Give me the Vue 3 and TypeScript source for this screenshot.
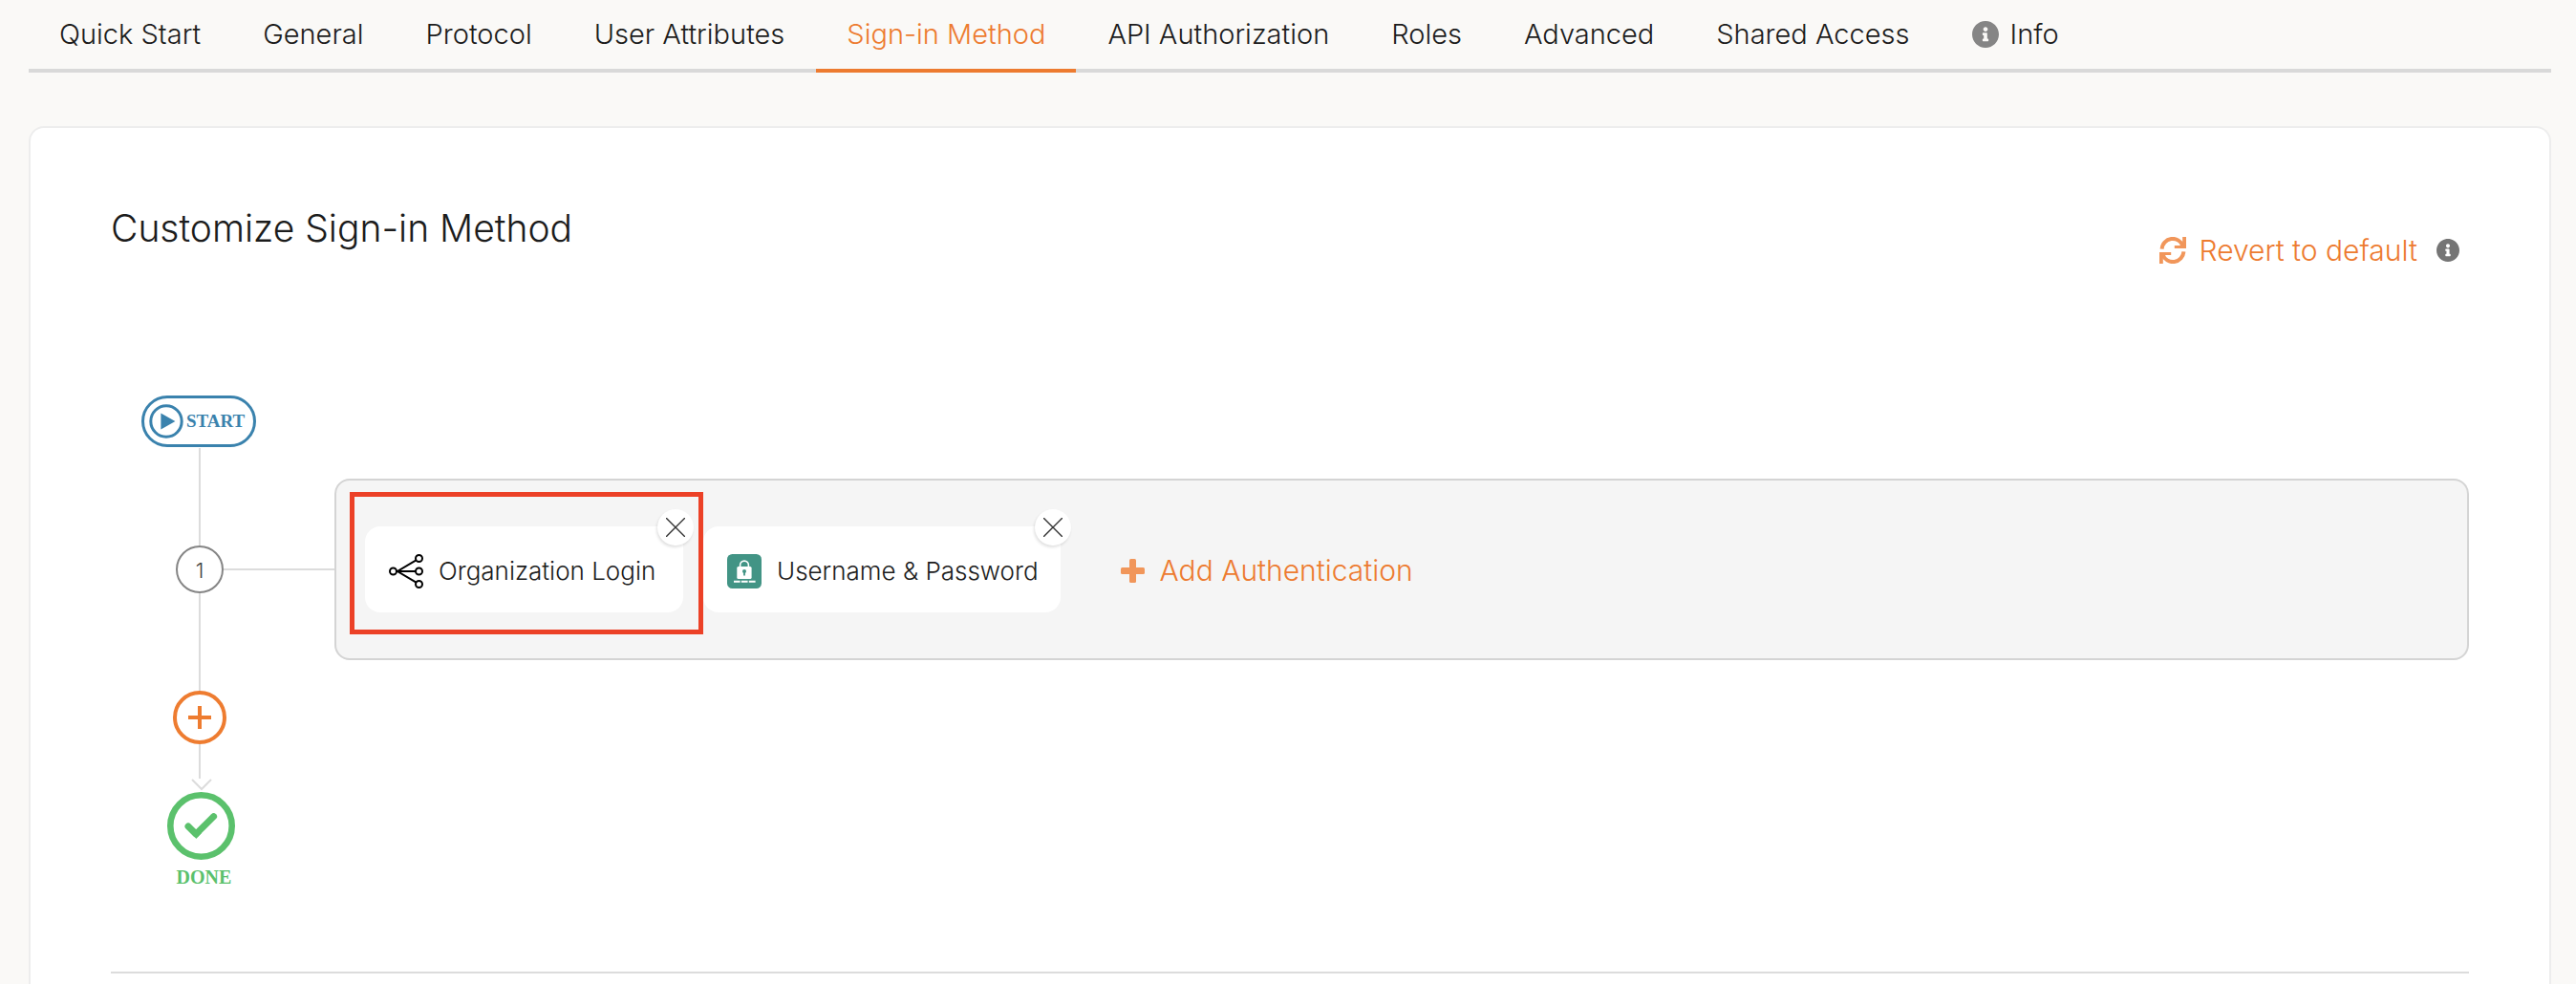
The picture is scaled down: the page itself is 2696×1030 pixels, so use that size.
<script setup lang="ts">
interface Tab {
  label: string
  active?: boolean
  info?: boolean
}

interface Authenticator {
  name: string
  icon: 'organization' | 'password'
  highlighted?: boolean
}

const tabs: Tab[] = [
  { label: 'Quick Start' },
  { label: 'General' },
  { label: 'Protocol' },
  { label: 'User Attributes' },
  { label: 'Sign-in Method', active: true },
  { label: 'API Authorization' },
  { label: 'Roles' },
  { label: 'Advanced' },
  { label: 'Shared Access' },
  { label: 'Info', info: true },
]

const authenticators: Authenticator[] = [
  { name: 'Organization Login', icon: 'organization', highlighted: true },
  { name: 'Username & Password', icon: 'password' },
]

const infoPath =
  'M256 8C119.043 8 8 119.083 8 256c0 136.997 111.043 248 248 248s248-111.003 248-248C504 119.083 392.957 8 256 8zm0 110c23.196 0 42 18.804 42 42s-18.804 42-42 42-42-18.804-42-42 18.804-42 42-42zm56 254c0 6.627-5.373 12-12 12h-88c-6.627 0-12-5.373-12-12v-24c0-6.627 5.373-12 12-12h12v-64h-12c-6.627 0-12-5.373-12-12v-24c0-6.627 5.373-12 12-12h64c6.627 0 12 5.373 12 12v100h12c6.627 0 12 5.373 12 12v24z'
</script>

<template>
  <div class="page">
    <nav class="tabs">
      <a
        v-for="tab in tabs"
        :key="tab.label"
        href="#"
        class="tab"
        :class="{ active: tab.active }"
        :aria-current="tab.active ? 'page' : undefined"
      >
        <svg v-if="tab.info" class="tab-icon" viewBox="8 8 496 496" aria-hidden="true">
          <path :d="infoPath" fill="currentColor" />
        </svg>
        <span>{{ tab.label }}</span>
      </a>
    </nav>

    <main class="panel">
      <header class="panel-header">
        <h1>Customize Sign-in Method</h1>
        <div class="revert">
          <button type="button" class="text-button">
            <svg class="sync-icon" viewBox="0 0 28 28" aria-hidden="true">
              <g fill="none" stroke="currentColor" stroke-width="4">
                <path d="M2.6 12.6A11.3 11.3 0 0 1 24.6 9.6" />
                <path d="M25.4 15.4A11.3 11.3 0 0 1 3.4 18.4" />
              </g>
              <path d="M24.2 0H28V12H15.8V9H21L24.2 8Z" fill="currentColor" />
              <path d="M3.8 28H0V16H12.2V19H7L3.8 20Z" fill="currentColor" />
            </svg>
            Revert to default
          </button>
          <svg class="hint-icon" viewBox="8 8 496 496" role="img" aria-label="Info">
            <path :d="infoPath" fill="currentColor" />
          </svg>
        </div>
      </header>

      <section class="flow">
        <div class="rail">
          <div class="start">
            <svg class="play-icon" viewBox="0 0 36 36" aria-hidden="true">
              <circle cx="18" cy="18" r="16.2" fill="none" stroke="currentColor" stroke-width="3" />
              <path d="M12.4 9.6 27.4 18 12.4 26.6Z" fill="currentColor" />
            </svg>
            <span>START</span>
          </div>
          <span class="line short"></span>
        </div>

        <div class="step">
          <div class="rail">
            <span class="line"></span>
            <span class="step-number">1</span>
            <span class="line"></span>
          </div>
          <span class="connector"></span>
          <div class="options">
            <div
              v-for="item in authenticators"
              :key="item.name"
              class="option"
              :class="{ highlighted: item.highlighted }"
            >
              <svg v-if="item.icon === 'organization'" class="option-icon" viewBox="0 0 36 36" aria-hidden="true">
                <g fill="none" stroke="#000" stroke-width="2">
                  <circle cx="4.5" cy="18" r="3.5" />
                  <circle cx="31.5" cy="4.5" r="3.5" />
                  <circle cx="31.5" cy="18" r="3.5" />
                  <circle cx="31.5" cy="31.5" r="3.5" />
                  <path d="M28.5 6.4 9 18 28.5 29.6M8 18H28" />
                </g>
              </svg>
              <svg v-else class="option-icon" viewBox="0 0 36 36" aria-hidden="true">
                <rect width="36" height="36" rx="5.5" fill="#429485" />
                <path d="M13.6 14V11.5A4.4 4.4 0 0 1 22.4 11.5V14" fill="none" stroke="#fff" stroke-width="1.6" />
                <rect x="10.3" y="13" width="15.3" height="13" rx="1.6" fill="#fff" />
                <circle cx="18" cy="18" r="2" fill="#429485" />
                <path d="M18 18V22.6" stroke="#429485" stroke-width="1.8" />
                <path d="M7 28.8H13.6M14.8 28.8H21.6M22.8 28.8H29.6" stroke="#fff" stroke-width="2" />
              </svg>
              <span>{{ item.name }}</span>
              <button type="button" class="remove" :aria-label="`Remove ${item.name}`">
                <svg viewBox="0 0 20 20" aria-hidden="true">
                  <path d="M0 0 20 20M20 0 0 20" fill="none" stroke="#333" stroke-width="1.4" />
                </svg>
              </button>
            </div>
            <button type="button" class="text-button add">
              <svg class="plus-icon" viewBox="0 0 25 25" aria-hidden="true">
                <rect x="9" width="7" height="25" rx="1.5" fill="currentColor" />
                <rect y="9" width="25" height="7" rx="1.5" fill="currentColor" />
              </svg>
              Add Authentication
            </button>
          </div>
        </div>

        <div class="rail">
          <span class="line short"></span>
          <button type="button" class="add-step" aria-label="Add step">
            <svg viewBox="0 0 24 24" aria-hidden="true">
              <path d="M12 0V24M0 12H24" stroke="currentColor" stroke-width="4" />
            </svg>
          </button>
          <span class="line tail"></span>
          <div class="done">
            <svg class="arrow-icon" viewBox="0 0 22 14" aria-hidden="true">
              <path d="M1 1 11 11 21 1" fill="none" stroke="currentColor" stroke-width="2" />
            </svg>
            <svg class="done-icon" viewBox="0 0 71 71" aria-hidden="true">
              <circle cx="35.5" cy="35.5" r="32.2" fill="none" stroke="currentColor" stroke-width="6.6" />
              <path d="M48.6 25.6 30.3 43.9" fill="none" stroke="currentColor" stroke-width="7" stroke-linecap="round" />
              <path d="M22 36 29.8 43.8" fill="none" stroke="currentColor" stroke-width="7" stroke-linecap="round" />
              <path d="M26 43 30.3 48.9 36 43Z" fill="currentColor" />
            </svg>
            <span class="done-label">DONE</span>
          </div>
        </div>
      </section>

      <hr class="divider" />
    </main>
  </div>
</template>

<style>
body {
  margin: 0;
  background: #faf9f7;
}
</style>

<style scoped>
.page {
  box-sizing: border-box;
  display: flex;
  flex-direction: column;
  min-height: 100vh;
  padding: 0 26px 0 30px;
  background: #faf9f7;
  color: #1c1c1c;
  font-family: Inter, "Liberation Sans", sans-serif;
  font-size: 29px;
  font-weight: 300;
  line-height: 36px;
}

.tabs {
  display: flex;
  gap: 1px;
  height: 76px;
  box-shadow: inset 0 -4px #d9d9d9;
}

.tab {
  display: flex;
  align-items: center;
  gap: 12px;
  padding: 0 32px 5px;
  color: inherit;
  text-decoration: none;
  white-space: nowrap;
}

.tab.active {
  color: #ed7b30;
  box-shadow: inset 0 -4px #ed7b30;
}

.tab-icon {
  width: 28px;
  height: 28px;
  color: #858585;
}

.panel {
  flex: 1;
  margin-top: 56px;
  padding: 84px 84px 0;
  border: 2px solid #ededed;
  border-bottom: 0;
  border-radius: 16px 16px 0 0;
  background: #fff;
}

.panel-header {
  display: flex;
  justify-content: space-between;
  height: 62px;
}

h1 {
  margin: 0;
  font-size: 39px;
  font-weight: 300;
  line-height: 42px;
}

.revert {
  display: flex;
  align-items: center;
  align-self: flex-end;
  gap: 20px;
  padding-right: 10px;
}

button {
  font: inherit;
  cursor: pointer;
}

.text-button {
  display: flex;
  align-items: center;
  gap: 14px;
  padding: 0;
  border: 0;
  background: none;
  color: #ed7b30;
  font-size: 30px;
  white-space: nowrap;
}

.sync-icon {
  width: 28px;
  height: 28px;
  color: #f1965a;
}

.hint-icon {
  width: 24px;
  height: 24px;
  color: #757575;
}

.flow {
  margin-top: 134px;
  padding-left: 32px;
}

.rail {
  display: flex;
  flex: none;
  flex-direction: column;
  align-items: center;
  width: 122px;
}

.start {
  box-sizing: border-box;
  display: flex;
  align-items: center;
  align-self: flex-start;
  gap: 3px;
  width: 120px;
  height: 54px;
  padding-left: 5px;
  border: 3px solid #3a82ad;
  border-radius: 27px;
  color: #3a82ad;
  font: bold 19px/24px "Liberation Serif", serif;
}

.play-icon {
  width: 36px;
  height: 36px;
}

.line {
  flex: 1;
  width: 2px;
  background: #dcdcdc;
}

.line.short {
  flex: none;
  height: 32px;
}

.start + .line {
  margin-top: 1px;
}

.line.tail {
  flex: none;
  height: 36px;
}

.step {
  display: flex;
}

.step-number {
  box-sizing: border-box;
  width: 50px;
  height: 50px;
  border: 2px solid #858585;
  border-radius: 50%;
  color: #444;
  font-size: 22px;
  line-height: 48px;
  text-align: center;
}

.connector {
  flex: none;
  align-self: center;
  width: 116px;
  height: 2px;
  margin-left: -36px;
  background: #dcdcdc;
}

.options {
  box-sizing: border-box;
  display: flex;
  flex: 1;
  align-items: center;
  gap: 21px;
  min-height: 190px;
  padding: 0 30px;
  border: 2px solid #d4d4d4;
  border-radius: 16px;
  background: #f5f5f5;
}

.option {
  box-sizing: border-box;
  position: relative;
  display: flex;
  align-items: center;
  gap: 16px;
  min-width: 333px;
  height: 90px;
  padding: 4px 23px 0 25px;
  border-radius: 16px;
  background: #fff;
  font-size: 26px;
  white-space: nowrap;
}

.option.highlighted::after {
  content: "";
  position: absolute;
  inset: -36px -21px -23px -16px;
  border: 5px solid #ec4127;
  pointer-events: none;
}

.option-icon {
  width: 36px;
  height: 36px;
}

.remove {
  position: absolute;
  top: -18px;
  right: -11px;
  display: flex;
  align-items: center;
  justify-content: center;
  width: 38px;
  height: 38px;
  padding: 0;
  border: 0;
  border-radius: 50%;
  background: #fff;
  box-shadow: -1px 2px 3px rgba(0, 0, 0, 0.12);
}

.remove svg {
  width: 20px;
  height: 20px;
}

.add {
  gap: 16px;
  margin-left: 42px;
  padding-top: 2px;
}

.plus-icon {
  width: 25px;
  height: 25px;
  color: #f1965a;
}

.add-step {
  box-sizing: border-box;
  display: flex;
  align-items: center;
  justify-content: center;
  width: 56px;
  height: 56px;
  padding: 0;
  border: 4px solid #ee7c30;
  border-radius: 50%;
  background: #fff;
  color: #ee7c30;
}

.add-step svg {
  width: 24px;
  height: 24px;
}

.done {
  display: flex;
  flex-direction: column;
  align-items: center;
  padding-left: 3px;
  color: #5bc16c;
}

.arrow-icon {
  width: 22px;
  height: 14px;
  color: #dcdcdc;
}

.done-icon {
  width: 71px;
  height: 71px;
}

.done-label {
  margin-top: 6px;
  padding-left: 6px;
  font: bold 20px/24px "Liberation Serif", serif;
}

.divider {
  height: 2px;
  margin: 87px 0 0;
  border: 0;
  background: #dcdcdc;
}
</style>
